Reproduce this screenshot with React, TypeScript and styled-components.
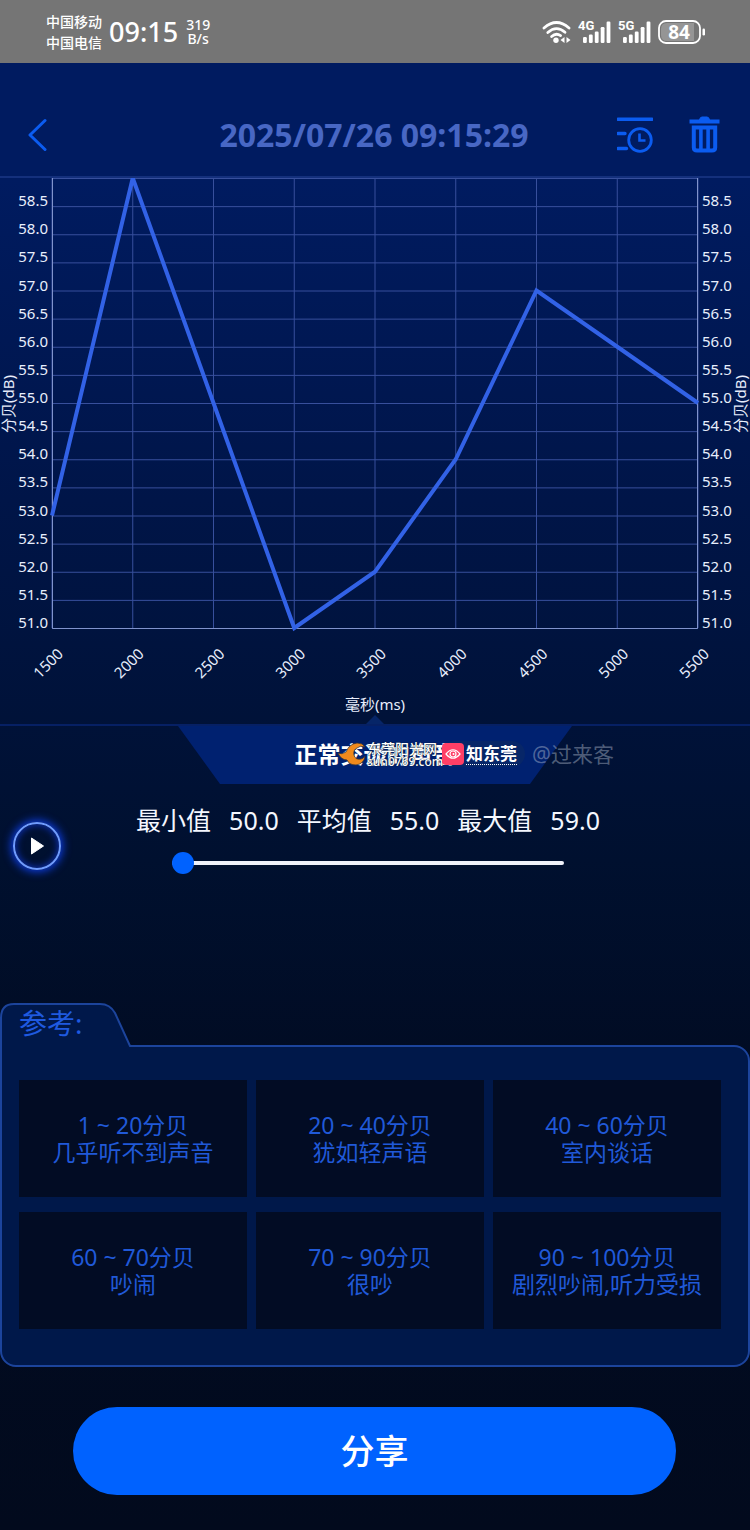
import React, { useState } from "react";
import styled, { createGlobalStyle } from "styled-components";

const sans = `"Noto Sans", "Noto Sans CJK SC", sans-serif`;

const GlobalStyle = createGlobalStyle`
  *, *::before, *::after { box-sizing: border-box; }
  html { background: #010a1e; }
  body { margin: 0; font-family: ${sans}; }
  h1, h2, p, dl, dd, dt, ul { margin: 0; padding: 0; }
  button { border: 0; padding: 0; background: none; font-family: inherit; cursor: pointer; }
`;

const Screen = styled.div`
  display: flex;
  flex-direction: column;
  min-height: 100vh;
  padding-bottom: 35px;
  background: linear-gradient(#001b60 0, #001b60 180px, #001548 500px, #00102f 860px, #010c24 1050px, #020a1d 100%);
`;

const StatusBar = styled.div`
  display: flex;
  align-items: center;
  height: 63px;
  padding: 0 44px 0 46px;
  background: #757575;
  color: #fff;
`;

const StackedText = styled.div<{ $line: number }>`
  font-size: 14px;
  font-weight: 500;
  line-height: ${(p) => p.$line}px;
  text-align: center;
`;

const Clock = styled.time`
  margin: 0 8px 0 7px;
  font-size: 27px;
  font-weight: 500;
  line-height: 32px;
`;

const StatusIcons = styled.div`
  display: flex;
  align-items: center;
  gap: 7px;
  margin-left: auto;
`;

const Header = styled.header`
  display: grid;
  grid-template-columns: 1fr auto 1fr;
  align-items: center;
  height: 115px;
  padding: 30px 30px 0 28px;
  border-bottom: 2px solid #14307c;
`;

const Title = styled.h1`
  color: #4867c4;
  font-size: 32px;
  font-weight: 700;
  line-height: 40px;
`;

const IconButton = styled.button`
  display: flex;
  color: #0b5cf0;
`;

const HeaderActions = styled.div`
  display: flex;
  justify-content: flex-end;
  gap: 36px;
`;

const ChartSvg = styled.svg`
  display: block;
  width: 100%;
  font-family: ${sans};
  font-size: 15px;
  fill: #e8eefc;
`;

const BannerArea = styled.section`
  position: relative;
  display: flex;
  justify-content: center;
  border-top: 2px solid #062064;
`;

const Banner = styled.h2`
  width: 394px;
  height: 58px;
  background: #002170;
  clip-path: polygon(0 0, 100% 0, 352px 100%, 42px 100%);
  color: #fff;
  font-size: 23px;
  font-weight: 700;
  line-height: 57px;
  text-align: center;
`;

const Watermark = styled.div`
  position: absolute;
  top: 15px;
  left: calc(50% - 38px);
  display: flex;
  align-items: center;
  height: 26px;
  color: #fff;
  white-space: nowrap;
`;

const SiteName = styled.div`
  display: flex;
  flex-direction: column;
  width: 75px;
  font-size: 14px;
  font-weight: 500;
  line-height: 14px;
  text-shadow: 0 0 1px #123, 0 0 1px #123;
`;

const SiteAddress = styled.span`
  font-size: 12px;
  line-height: 11px;
`;

const AppTag = styled.div`
  display: flex;
  align-items: center;
  gap: 2px;
  height: 26px;
  margin-right: 7px;
  padding-right: 8px;
  border-radius: 13px;
  background: rgba(20, 50, 90, 0.35);
`;

const AppName = styled.span`
  border-bottom: 1px dotted #fff;
  font-size: 17px;
  font-weight: 700;
  line-height: 20px;
`;

const Author = styled.span`
  color: rgba(190, 200, 215, 0.42);
  font-size: 21px;
  line-height: 26px;
`;

const Player = styled.section`
  display: flex;
  align-items: flex-start;
  height: 80px;
  margin-top: 20px;
  padding: 0 75px 0 13px;
`;

const PlayButton = styled.button`
  display: flex;
  align-items: center;
  justify-content: center;
  flex: none;
  width: 48px;
  height: 48px;
  margin-top: 18px;
  border: 2px solid #6f9bff;
  border-radius: 50%;
  box-shadow: 0 0 8px 2px #0d3de0, inset 0 0 7px 1px #0d2fb0;
`;

const PlayerBody = styled.div`
  display: flex;
  flex: 1;
  flex-direction: column;
  align-items: center;
  gap: 16px;
`;

const Stats = styled.dl`
  display: flex;
  gap: 18px;
  color: #f4f7ff;
  font-size: 25px;
  line-height: 32px;
`;

const Stat = styled.div`
  display: flex;
  gap: 18px;
`;

const Slider = styled.input`
  width: 392px;
  max-width: 100%;
  height: 22px;
  margin: 0;
  appearance: none;
  background: none;

  &::-webkit-slider-runnable-track {
    height: 4px;
    border-radius: 2px;
    background: #f0f2fa;
  }
  &::-webkit-slider-thumb {
    appearance: none;
    width: 22px;
    height: 22px;
    margin-top: -9px;
    border-radius: 50%;
    background: #0062ff;
  }
`;

const Reference = styled.section`
  margin-top: 119px;
`;

const Tab = styled.div`
  position: relative;
  width: 132px;
  height: 44px;
  margin-bottom: -2px;
  padding-left: 19px;
`;

const TabShape = styled.svg`
  position: absolute;
  inset: 0;
`;

const TabLabel = styled.h2`
  position: relative;
  color: #1f5ae0;
  font-size: 28px;
  font-weight: 400;
  line-height: 40px;
`;

const Panel = styled.ul`
  display: grid;
  grid-template-columns: repeat(3, 1fr);
  gap: 15px 9px;
  padding: 33px 27px 36px 17px;
  border: 2px solid #1c449c;
  border-radius: 0 16px 16px 16px;
  background: #00184a;
  list-style: none;
`;

const LevelCard = styled.li`
  display: flex;
  flex-direction: column;
  align-items: center;
  justify-content: center;
  height: 117px;
  background: #020c24;
  color: #2059d8;
  font-size: 23px;
  line-height: 27px;
  white-space: nowrap;
`;

const ShareButton = styled.button`
  align-self: stretch;
  height: 88px;
  margin: 40px 74px 0 73px;
  border-radius: 44px;
  background: #0062ff;
  color: #fff;
  font-size: 34px;
  font-weight: 500;
  line-height: 88px;
`;

const WifiIcon = () => (
  <svg width="29" height="24" viewBox="0 0 29 24" fill="none" stroke="#fff" strokeWidth="2.8" strokeLinecap="round" aria-hidden="true">
    <path d="M2 8 Q14.500 -3 27 8" />
    <path d="M5.800 12.500 Q14.500 4.800 23 12.300" />
    <path d="M9.600 16.500 Q14 12.600 18.600 15.600" />
    <circle cx="14" cy="20.300" r="2.700" fill="#fff" stroke="none" />
    <path d="M22.500 17 V23 L18.500 20 Z M24.500 17 V23 L28.500 20 Z" fill="#fff" stroke="none" />
  </svg>
);

const SignalIcon = ({ label }: { label: string }) => (
  <svg width="33" height="30" viewBox="0 -3 33 30" fill="#fff" aria-hidden="true">
    <text x="0" y="10" fontSize="13" fontWeight="700" fontFamily="Roboto, sans-serif">{label}</text>
    {[17, 14.5, 11.5, 7, 1.5].map((y, i) => (
      <rect key={y} x={5 + i * 5.9} y={y} width="3.800" height={23 - y} rx="1.200" />
    ))}
  </svg>
);

const BatteryIcon = () => (
  <svg width="48" height="24" viewBox="0 0 48 24" aria-hidden="true">
    <rect x="1" y="1" width="41" height="22" rx="7" fill="none" stroke="#fff" strokeWidth="1.800" />
    <path d="M9 3 H36 V21 H9 Q3 21 3 15 V9 Q3 3 9 3Z" fill="#959595" />
    <rect x="44.500" y="8.500" width="2.500" height="7" rx="1.200" fill="#fff" />
    <text x="21" y="19" textAnchor="middle" fontSize="19" fontWeight="700" fontFamily={sans} fill="#fff">84</text>
  </svg>
);

const BackIcon = () => (
  <svg width="20" height="34" viewBox="0 0 20 34" fill="none" stroke="currentColor" strokeWidth="3" strokeLinecap="round" strokeLinejoin="round" aria-hidden="true">
    <path d="M17 2.500 L2 17 L17 31.500" />
  </svg>
);

const HistoryIcon = () => (
  <svg width="36" height="38" viewBox="0 0 36 38" fill="none" stroke="currentColor" strokeWidth="3.400" aria-hidden="true">
    <path d="M1 3.200 H35 M1 17.500 H8 M1 32.500 H9.500" strokeLinecap="round" />
    <circle cx="23" cy="24" r="11.300" strokeWidth="2.800" />
    <path d="M22.500 17.500 V24.500 H28.500" strokeWidth="2.600" />
  </svg>
);

const TrashIcon = () => (
  <svg width="31" height="38" viewBox="0 0 31 38" fill="none" stroke="currentColor" aria-hidden="true">
    <path d="M0.500 5.500 H30.500" strokeWidth="4" />
    <path d="M10.500 4 Q11 1 13 1 H18 Q20 1 20.500 4 Z" strokeWidth="1" fill="currentColor" />
    <path d="M4.800 11.500 H26.200 V31.500 Q26.200 34.500 23 34.500 H8 Q4.800 34.500 4.800 31.500 Z" strokeWidth="4" />
    <path d="M11.900 12 V34 M19.100 12 V34" strokeWidth="3.600" />
  </svg>
);

const SunLogo = () => (
  <svg width="30" height="24" viewBox="0 0 30 24" aria-hidden="true">
    <path d="M1 11 Q5 13 9 10 Q12 2 20 1 Q26 1 28 5 Q23 3 20 6 Q16 8 17 13 Q18 18 24 17 Q26 17 28 14 Q27 22 19 23 Q12 23 10 18 Q4 18 1 11Z" fill="#f08a1c" stroke="#3b3535" strokeWidth="0.800" />
  </svg>
);

const EyeBadge = () => (
  <svg width="22" height="22" viewBox="0 0 22 22" fill="none" aria-hidden="true">
    <rect width="22" height="22" rx="4" fill="#ff3f66" />
    <path d="M4 11 Q11 2.500 18 11 Q11 19.500 4 11Z" stroke="#fff" strokeWidth="1.200" />
    <circle cx="11" cy="11" r="3" stroke="#fff" strokeWidth="1.200" />
    <circle cx="11.500" cy="11" r="1" fill="#fff" />
  </svg>
);

const PLOT = { left: 52, right: 698, bottom: 450 };
const MIN_DB = 51;
const MAX_DB = 59;
const times = [1500, 2000, 2500, 3000, 3500, 4000, 4500, 5000, 5500];
const readings = [53, 59, 55, 51, 52, 54, 57, 56, 55];
const levels = Array.from({ length: 17 }, (_, i) => MIN_DB + i / 2);

const xAt = (ms: number) => PLOT.left + ((ms - 1500) / 4000) * (PLOT.right - PLOT.left);
const yAt = (db: number) => ((MAX_DB - db) / (MAX_DB - MIN_DB)) * PLOT.bottom;

const DecibelChart = () => (
  <ChartSvg viewBox="0 0 750 546" role="img" aria-label="分贝曲线">
    <g stroke="#374f9c" strokeWidth="1">
      {levels.map((db) => (
        <line key={db} x1={PLOT.left} x2={PLOT.right} y1={yAt(db) + 0.5} y2={yAt(db) + 0.5} />
      ))}
      {times.map((ms) => (
        <line key={ms} x1={xAt(ms)} x2={xAt(ms)} y1="0" y2={PLOT.bottom} />
      ))}
    </g>
    <path d={`M${PLOT.left}.5 0 V${PLOT.bottom}.5 H${PLOT.right - 1}.5 V0`} fill="none" stroke="#8093cc" />
    <polyline
      points={times.map((ms, i) => `${xAt(ms)},${yAt(readings[i])}`).join(" ")}
      fill="none"
      stroke="#3262e6"
      strokeWidth="4"
    />
    {levels.slice(0, -1).map((db) => (
      <g key={db}>
        <text x="48" y={yAt(db)} textAnchor="end">{db.toFixed(1)}</text>
        <text x="702" y={yAt(db)}>{db.toFixed(1)}</text>
      </g>
    ))}
    {times.map((ms) => (
      <text key={ms} textAnchor="middle" transform={`translate(${xAt(ms)} 489) rotate(-45)`}>{ms}</text>
    ))}
    <text textAnchor="middle" transform="translate(14 226) rotate(-90)">分贝(dB)</text>
    <text textAnchor="middle" transform="translate(746 226) rotate(-90)">分贝(dB)</text>
    <text x="375" y="532" textAnchor="middle">毫秒(ms)</text>
    <path d="M366 546 L375 537 L384 546Z" fill="#062568" />
  </ChartSvg>
);

const stats = [
  ["最小值", "50.0"],
  ["平均值", "55.0"],
  ["最大值", "59.0"],
];

const noiseLevels = [
  ["1 ~ 20分贝", "几乎听不到声音"],
  ["20 ~ 40分贝", "犹如轻声语"],
  ["40 ~ 60分贝", "室内谈话"],
  ["60 ~ 70分贝", "吵闹"],
  ["70 ~ 90分贝", "很吵"],
  ["90 ~ 100分贝", "剧烈吵闹,听力受损"],
];

export default function App() {
  const [position, setPosition] = useState(0);

  return (
    <>
      <GlobalStyle />
      <Screen>
        <StatusBar>
          <StackedText $line={21}>中国移动<br />中国电信</StackedText>
          <Clock>09:15</Clock>
          <StackedText $line={14}>319<br />B/s</StackedText>
          <StatusIcons>
            <WifiIcon />
            <SignalIcon label="4G" />
            <SignalIcon label="5G" />
            <BatteryIcon />
          </StatusIcons>
        </StatusBar>

        <Header>
          <IconButton aria-label="返回"><BackIcon /></IconButton>
          <Title>2025/07/26 09:15:29</Title>
          <HeaderActions>
            <IconButton aria-label="历史记录"><HistoryIcon /></IconButton>
            <IconButton aria-label="删除"><TrashIcon /></IconButton>
          </HeaderActions>
        </Header>

        <DecibelChart />

        <BannerArea>
          <Banner>正常交谈的声音</Banner>
          <Watermark>
            <SunLogo />
            <SiteName>
              <span>东莞阳光网</span>
              <SiteAddress>sun0769.com</SiteAddress>
            </SiteName>
            <AppTag>
              <EyeBadge />
              <AppName>知东莞</AppName>
            </AppTag>
            <Author>@过来客</Author>
          </Watermark>
        </BannerArea>

        <Player>
          <PlayButton aria-label="播放">
            <svg width="16" height="20" viewBox="0 0 16 20" aria-hidden="true">
              <path d="M2.500 2 L14.500 10 L2.500 18Z" fill="#fff" stroke="#fff" strokeLinejoin="round" />
            </svg>
          </PlayButton>
          <PlayerBody>
            <Stats>
              {stats.map(([name, value]) => (
                <Stat key={name}>
                  <dt>{name}</dt>
                  <dd>{value}</dd>
                </Stat>
              ))}
            </Stats>
            <Slider
              type="range"
              min="0"
              max="100"
              value={position}
              aria-label="播放进度"
              onChange={(e) => setPosition(Number(e.target.value))}
            />
          </PlayerBody>
        </Player>

        <Reference>
          <Tab>
            <TabShape width="132" height="44" viewBox="0 0 132 44" aria-hidden="true">
              <path d="M0 44 V15 Q0 1 14 1 H100 Q110 1 115 10 L131 44Z" fill="#00184a" />
              <path d="M1 44 V15 Q1 1 14 1 H100 Q110 1 115 10 L130 43 H132" fill="none" stroke="#1c449c" strokeWidth="2" />
            </TabShape>
            <TabLabel>参考:</TabLabel>
          </Tab>
          <Panel>
            {noiseLevels.map(([range, description]) => (
              <LevelCard key={range}>
                <span>{range}</span>
                <span>{description}</span>
              </LevelCard>
            ))}
          </Panel>
        </Reference>

        <ShareButton>分享</ShareButton>
      </Screen>
    </>
  );
}
